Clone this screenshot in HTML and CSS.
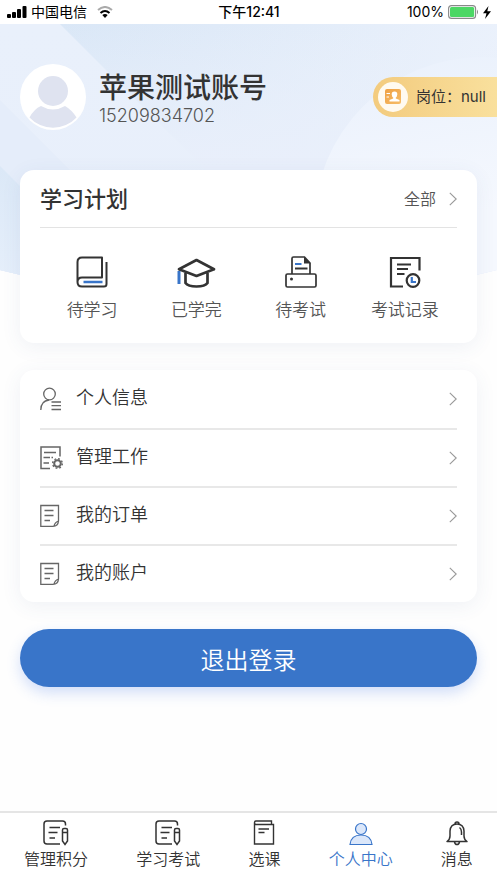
FILE: index.html
```html
<!DOCTYPE html>
<html lang="zh-CN">
<head>
<meta charset="utf-8">
<meta name="viewport" content="width=device-width, initial-scale=1">
<title>个人中心</title>
<link rel="stylesheet" href="styles.css">
</head>
<body>
<svg class="defs" aria-hidden="true">
  <symbol id="chevron" viewBox="0 0 8 14"><path d="M.8.8 7.2 7 .8 13.2" fill="none" stroke="currentColor" stroke-width="1.1"/></symbol>
  <symbol id="sheet" viewBox="0 0 24 24"><path d="M.8 1.500H18.500V17Q18 22.300 13 22.300H.8ZM14 22.300Q14.500 18.500 18.500 17M4.500 6.500H13.500M4.500 11.500H13.500M4.500 16.500H10" fill="none" stroke="currentColor" stroke-width="1.300"/></symbol>
  <symbol id="note" viewBox="0 0 26 26"><path d="M22.500 5.500V4Q22.500 1 19.500 1H4Q1 1 1 4V21Q1 24 4 24H17M6.500 7.500H17M5.500 12.500H14.500M6.500 18H12M19.500 10Q19.500 8.500 21 8.500H23Q24.500 8.500 24.500 10V21L22 24.500 19.500 21ZM19.500 12.500H24.500" fill="none" stroke="currentColor" stroke-width="1.500"/></symbol>
</svg>
<div class="app">
  <header class="status">
    <div class="status-left">
      <svg width="20" height="13" viewBox="0 0 20 13" aria-hidden="true"><rect x="0" y="8" width="4" height="4" rx="1"/><rect x="5" y="6" width="4" height="6" rx="1"/><rect x="10" y="3" width="4" height="9" rx="1"/><rect x="15.500" y="0" width="4" height="12" rx="1"/></svg>
      <span>中国电信</span>
      <svg class="wifi" width="16" height="12" viewBox="0 0 16 12" fill="none" aria-hidden="true"><path d="M1 4Q8-2 15 4" stroke="#aaa" stroke-width="2"/><path d="M3.500 7Q8 3 12.500 7" stroke="#000" stroke-width="2"/><path d="M5.300 9Q8 7 10.700 9L8 12Z" fill="#000"/></svg>
    </div>
    <time>下午12:41</time>
    <div class="status-right">
      <span>100%</span>
      <svg width="31" height="14" viewBox="0 0 31 14" aria-hidden="true"><rect x=".6" y=".6" width="27" height="12.800" rx="3" fill="#fff" stroke="#888" stroke-width="1.100"/><rect x="2" y="2" width="24.200" height="10" rx="1.500" fill="#4cd764"/><path d="M29 4.500Q31 7 29 9.500Z" fill="#888"/></svg>
      <svg width="8" height="13" viewBox="0 0 8 13" aria-hidden="true"><path d="M5.500 0 0 7.200H3.500L2 13 8 5.300H4.300Z"/></svg>
    </div>
  </header>
  <main class="main">
    <svg class="backdrop" viewBox="0 0 497 262" preserveAspectRatio="none" aria-hidden="true">
      <defs>
        <linearGradient id="sky" x1="0" y1="0" x2="1" y2=".3"><stop offset="0" stop-color="#d8e6f6"/><stop offset=".4" stop-color="#dfeaf8"/><stop offset="1" stop-color="#ecf2fc"/></linearGradient>
        <linearGradient id="band" x1="0" y1="0" x2="0" y2="1"><stop offset="0" stop-color="#e9f0fb"/><stop offset="1" stop-color="#e8effb"/></linearGradient>
        <linearGradient id="mist" x1="0" y1="0" x2="0" y2="1"><stop offset="0" stop-color="#e9f0fb" stop-opacity="0"/><stop offset=".55" stop-color="#e9effb"/></linearGradient>
        <linearGradient id="corner" x1="0" y1="0" x2="0" y2="1"><stop offset="0" stop-color="#dbe8f7"/><stop offset="1" stop-color="#e6effb"/></linearGradient>
        <linearGradient id="moon" x1=".2" y1="0" x2=".4" y2="1"><stop offset="0" stop-color="#eaf1fc"/><stop offset=".5" stop-color="#f5f8fe"/></linearGradient>
        <clipPath id="dome"><path d="M0 0H497V246Q248 310 0 246Z"/></clipPath>
      </defs>
      <g clip-path="url(#dome)">
        <path d="M0 0H497V262H0Z" fill="url(#sky)"/>
        <path d="M0 0H497V262H0Z" fill="url(#mist)"/>
        <path d="M0 0H60L206 146V262H0Z" fill="url(#band)"/>
        <path d="M0 76 186 262H0Z" fill="#e5edfa"/>
        <path d="M0 142 120 262H0Z" fill="url(#corner)"/>
        <circle cx="482" cy="201" r="168" fill="url(#moon)"/>
      </g>
    </svg>
    <section class="profile">
      <svg class="avatar" viewBox="0 0 66 66" aria-hidden="true"><circle cx="33" cy="33" r="33" fill="#fff"/><circle cx="33" cy="27" r="15" fill="#dfe3f0"/><path d="M9.500 53.500Q14 45 21 42Q33 49 45 42Q52 46 56.500 53.500A32 32 0 0 1 9.500 53.500Z" fill="#dfe3f0"/></svg>
      <div class="identity">
        <h1>苹果测试账号</h1>
        <p>15209834702</p>
      </div>
      <div class="post">
        <svg width="30" height="30" viewBox="0 0 30 30" aria-hidden="true"><defs><linearGradient id="gold" x1="0" y1="0" x2="1" y2="1"><stop offset="0" stop-color="#efa044"/><stop offset="1" stop-color="#f6bd68"/></linearGradient></defs><circle cx="15" cy="15" r="15" fill="#fffaf0"/><rect x="7" y="7" width="16" height="15" rx="2" fill="url(#gold)"/><path d="M8.500 11.500H12M8.500 15H11" stroke="#fff" stroke-width="1"/><path d="M16.500 9.500Q19.500 9.500 19.300 12.500Q19 15 17.800 15.500V16.500L21.500 18V19.500H11.500V18L15.200 16.500V15.500Q14 15 13.700 12.500Q13.500 9.500 16.500 9.500Z" fill="#fff"/></svg>
        <span>岗位：null</span>
      </div>
    </section>
    <section class="card plan">
      <div class="plan-head">
        <h2>学习计划</h2>
        <a href="#all">全部<svg class="chevron" aria-hidden="true"><use href="#chevron"/></svg></a>
      </div>
      <nav class="shortcuts">
        <a href="#todo">
          <svg width="32" height="32" viewBox="0 0 32 32" fill="none" stroke="#333" stroke-width="2" stroke-linejoin="round" aria-hidden="true"><path d="M1.500 26V6Q1.500 1.500 6 1.500H26V21.500H6Q1.500 21.500 1.500 26Q1.500 30.500 6 30.500H28Q30.500 30.500 30.500 28V6"/><path d="M7.500 26H26.500" stroke="#3975c9" stroke-width="2.500"/></svg>
          <span>待学习</span>
        </a>
        <a href="#done">
          <svg width="40" height="32" viewBox="0 0 40 32" fill="none" stroke="#333" stroke-width="2.700" stroke-linejoin="round" aria-hidden="true"><path d="M3 15V28" stroke="#3975c9" stroke-width="3"/><path d="M3 13.300 20.500 4 38 13.300 20.500 20Z"/><path d="M9.500 17V27Q12 30.500 20.500 30.500T31.500 27V17"/></svg>
          <span>已学完</span>
        </a>
        <a href="#exam">
          <svg width="32" height="32" viewBox="0 0 32 32" fill="none" stroke="#333" stroke-width="1.700" aria-hidden="true"><rect x="1" y="18" width="30" height="13" rx="1.500"/><path d="M7 18V2.500Q7 1 8.500 1H19.500L25 7V18"/><path d="M19 1 25.500 7.500H19Z" fill="#333" stroke="none"/><path d="M10 12.500H22.500" stroke-width="2"/><path d="M10 8H16.500" stroke="#3975c9" stroke-width="2"/><circle cx="6.500" cy="23" r="1.500" fill="#333" stroke="none"/></svg>
          <span>待考试</span>
        </a>
        <a href="#history">
          <svg width="32" height="32" viewBox="0 0 32 32" fill="none" stroke="#333" stroke-width="2.200" aria-hidden="true"><path d="M30.500 14.500V2H2V30.500H14M8 8.500H22M8 13H19M8 18H15.500"/><circle cx="24" cy="24.500" r="6.300"/><path d="M22.800 21V26H27" stroke="#3975c9"/></svg>
          <span>考试记录</span>
        </a>
      </nav>
    </section>
    <nav class="card menu">
      <a href="#profile">
        <svg class="menu-icon" viewBox="0 0 24 24" fill="none" stroke="currentColor" stroke-width="1.300" aria-hidden="true"><circle cx="9.500" cy="7" r="5.800"/><path d="M.8 23Q.8 14 9 13M11.500 15H21M11.500 18.700H21M11.500 22.500H21"/></svg>
        <span>个人信息</span><svg class="chevron" aria-hidden="true"><use href="#chevron"/></svg>
      </a>
      <a href="#work">
        <svg class="menu-icon" viewBox="0 0 24 24" fill="none" stroke="currentColor" stroke-width="1.500" aria-hidden="true"><path d="M20 10.500V1H1V22.500H10M4 6.500H16M3.500 11.500H10M11.500 11.500H13M3.500 17H9"/><circle cx="17.500" cy="17.500" r="3.300" stroke-width="2"/><circle cx="17.500" cy="17.500" r="4.800" stroke-width="1.500" stroke-dasharray="1.800 1.970"/></svg>
        <span>管理工作</span><svg class="chevron" aria-hidden="true"><use href="#chevron"/></svg>
      </a>
      <a href="#orders">
        <svg class="menu-icon" aria-hidden="true"><use href="#sheet"/></svg>
        <span>我的订单</span><svg class="chevron" aria-hidden="true"><use href="#chevron"/></svg>
      </a>
      <a href="#account">
        <svg class="menu-icon" aria-hidden="true"><use href="#sheet"/></svg>
        <span>我的账户</span><svg class="chevron" aria-hidden="true"><use href="#chevron"/></svg>
      </a>
    </nav>
    <button class="logout" type="button">退出登录</button>
  </main>
  <nav class="tabs">
    <a href="#points"><svg class="tab-icon" aria-hidden="true"><use href="#note"/></svg><span>管理积分</span></a>
    <a href="#study"><svg class="tab-icon" aria-hidden="true"><use href="#note"/></svg><span>学习考试</span></a>
    <a href="#courses">
      <svg class="tab-icon" viewBox="0 0 26 26" fill="none" stroke="currentColor" stroke-width="1.400" aria-hidden="true"><path d="M20.500 4.500V1H5Q3.500 1 3.500 2.500V24H22.500V4.500H5Q3.500 4.500 3.500 2.500M7.500 9H18M7.500 12.500H13.500"/></svg>
      <span>选课</span>
    </a>
    <a href="#me" class="active" aria-current="page">
      <svg class="tab-icon" viewBox="0 0 26 26" fill="#dbe7fa" stroke="currentColor" stroke-width="1.200" aria-hidden="true"><circle cx="13" cy="9" r="5.500"/><path d="M2 24.500Q3 15 13 15T24 24.500Z"/></svg>
      <span>个人中心</span>
    </a>
    <a href="#messages">
      <svg class="tab-icon" viewBox="0 0 26 26" fill="none" stroke="currentColor" stroke-width="1.500" stroke-linejoin="round" aria-hidden="true"><path d="M11 4Q11 2 13 2T15 4M3 21.500Q6 19.500 6 16V11Q6.500 4 13 4T20 11V16Q20 19.500 23 21.500ZM15.500 7.500Q17.500 9 17.500 12V15M10.500 22Q11 24.500 13 24.500T15.500 22"/></svg>
      <span>消息</span>
    </a>
  </nav>
</div>
</body>
</html>
```
FILE: styles.css
```css
* {
  box-sizing: border-box;
}

body {
  margin: 0;
  background: #fefefe;
  color: #333;
  font-family: Inter, "Noto Sans CJK SC", sans-serif;
}

h1, h2, p {
  margin: 0;
}

a {
  color: inherit;
  text-decoration: none;
}

svg {
  display: block;
  flex: none;
}

.defs {
  position: absolute;
  width: 0;
  height: 0;
}

.app {
  display: flex;
  flex-direction: column;
  min-height: 100vh;
}

.status {
  display: grid;
  grid-template-columns: 1fr auto 1fr;
  align-items: center;
  height: 24px;
  padding: 0 6px 0 7px;
  background: #fff;
  color: #000;
  font-size: 14px;
  line-height: 24px;
}

.status time {
  font-weight: 500;
}

.status-left,
.status-right {
  display: flex;
  align-items: center;
  gap: 4px;
}

.wifi {
  margin-left: 6px;
}

.status-right {
  justify-content: flex-end;
}

.main {
  position: relative;
  flex: 1;
  padding: 0 20px;
}

.backdrop {
  position: absolute;
  top: 0;
  left: 0;
  z-index: -1;
  width: 100%;
  height: 262px;
}

.profile {
  display: flex;
  align-items: center;
  height: 146px;
}

.avatar {
  width: 66px;
  height: 66px;
}

.identity {
  flex: 1;
  margin-left: 13px;
  padding-top: 4px;
}

.identity h1 {
  font-size: 28px;
  line-height: 34px;
  font-weight: 500;
}

.identity p {
  color: #555;
  font-size: 18px;
  line-height: 22px;
  font-weight: 300;
}

.post {
  display: flex;
  align-items: center;
  gap: 8px;
  height: 40px;
  margin-right: -20px;
  padding: 0 11px 0 5px;
  border-radius: 20px 0 0 20px;
  background: linear-gradient(90deg, #f3cb7e, #f9e09d);
  font-size: 15px;
  line-height: 20px;
}

.card {
  padding: 0 20px;
  border-radius: 14px;
  background: #fff;
  box-shadow: 0 4px 20px rgba(70, 90, 140, 0.08);
}

.plan-head {
  display: flex;
  align-items: center;
  justify-content: space-between;
  height: 58px;
  border-bottom: 1px solid #e3e3e3;
}

.plan-head h2 {
  font-size: 22px;
  line-height: 28px;
  font-weight: 500;
}

.plan-head a {
  display: flex;
  align-items: center;
  gap: 13px;
  color: #555;
  font-size: 16px;
  font-weight: 350;
  line-height: 24px;
}

.chevron {
  width: 8px;
  height: 14px;
  color: #999;
}

.shortcuts {
  display: grid;
  grid-template-columns: repeat(4, 1fr);
  padding: 28px 0 20px;
}

.shortcuts a {
  display: flex;
  flex-direction: column;
  align-items: center;
  gap: 10px;
  color: #555;
  font-size: 17px;
  font-weight: 350;
  line-height: 25px;
  white-space: nowrap;
}

.menu {
  margin-top: 27px;
}

.menu a {
  display: flex;
  align-items: center;
  height: 58px;
  color: #333;
  font-size: 18px;
  font-weight: 350;
  line-height: 24px;
}

.menu a + a {
  border-top: 2px solid #e8e8e8;
}

.menu span {
  flex: 1;
  margin-left: 12px;
  padding-bottom: 2px;
}

.menu-icon {
  width: 24px;
  height: 24px;
  color: #666;
}

.logout {
  display: block;
  width: 100%;
  height: 58px;
  margin-top: 27px;
  border: 0;
  border-radius: 29px;
  background: #3975c9;
  box-shadow: 0 6px 14px rgba(70, 120, 230, 0.24);
  color: #fff;
  font: 350 24px Inter, "Noto Sans CJK SC", sans-serif;
}

.tabs {
  display: flex;
  justify-content: space-around;
  height: 72px;
  padding-top: 7px;
  border-top: 2px solid #e5e5e5;
  background: #fff;
}

.tabs a {
  display: flex;
  flex-direction: column;
  align-items: center;
  gap: 1px;
  font-size: 16px;
  font-weight: 350;
  line-height: 24px;
}

.tabs .active {
  color: #3975c9;
}

.tab-icon {
  width: 26px;
  height: 26px;
}
```
